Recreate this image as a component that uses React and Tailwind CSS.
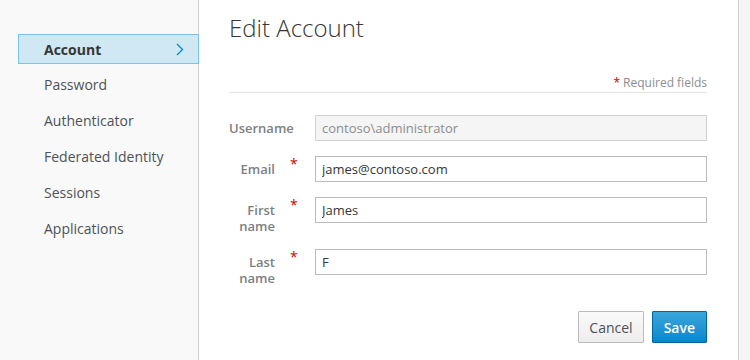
import React from "react";

const menu = ["Account", "Password", "Authenticator", "Federated Identity", "Sessions", "Applications"];

function Row({ label, required, value, disabled }) {
  return (
    <div className="flex items-start mb-[15px]">
      {required ? (
        <>
          <label className="w-[46px] text-right text-[13px] leading-[16px] pt-[5px] font-semibold text-[#7d7f82]">
            {label}
          </label>
          <span className="w-[40px] pl-[15px] text-[14px] leading-[16px] text-[#c00]">*</span>
        </>
      ) : (
        <>
          <label className="w-[60px] text-right text-[13px] leading-[16px] pt-[5px] font-semibold text-[#7d7f82]">
            {label}
          </label>
          <span className="w-[26px]" />
        </>
      )}
      <input
        type="text"
        value={value}
        readOnly
        disabled={disabled}
        className={
          "flex-1 h-[26px] px-[6px] text-[13px] border outline-none " +
          (disabled
            ? "bg-[#f5f5f5] border-[#d1d1d1] text-[#8b8d8f]"
            : "bg-white border-[#bbbbbb] text-[#363636]")
        }
      />
    </div>
  );
}

export default function App() {
  return (
    <div className="flex w-[750px] h-[360px] overflow-hidden font-['Open_Sans',sans-serif] text-[#363636]">
      {/* sidebar */}
      <div className="w-[199px] shrink-0 bg-[#f9f9f9] border-r border-[#d1d1d1] pt-[34px]">
        {menu.map((item, i) =>
          i === 0 ? (
            <div
              key={item}
              className="ml-[18px] mr-[-1px] h-[30px] flex items-center justify-between pl-[25px] pr-[14px] bg-[#cfe8f3] border border-[#7cc4e6] text-[14px] font-bold mb-[2px]"
            >
              <span>{item}</span>
              <svg width="8" height="13" viewBox="0 0 8 13">
                <path d="M1 1l5.5 5.5L1 12" fill="none" stroke="#0088ce" strokeWidth="1.3" />
              </svg>
            </div>
          ) : (
            <div key={item} className="ml-[44px] h-[36px] flex items-center text-[14px] text-[#4d5258]">
              {item}
            </div>
          )
        )}
      </div>

      {/* main */}
      <div className="w-[539px] shrink-0 bg-white pl-[30px] pr-[31px]">
        <h1 className="text-[24px] font-light leading-[32px] mt-[12px] text-[#363636]">Edit Account</h1>
        <div className="mt-[31px] text-right text-[12px] leading-[16px] text-[#8b8d8f] pb-[1px] border-b border-[#e3e3e3]">
          <span className="text-[#c00]">*</span> Required fields
        </div>

        <div className="mt-[22px]">
          <Row label="Username" value="contoso\administrator" disabled />
          <Row label="Email" required value="james@contoso.com" />
          <Row label="First name" required value="James" />
          <Row label="Last name" required value="F" />
        </div>

        <div className="flex justify-end gap-[8px] mt-[25px]">
          <button className="h-[32px] px-[10px] text-[14px] text-[#4d5258] border border-[#bbbbbb] rounded-[1px] bg-gradient-to-b from-[#fafafa] to-[#ededed]">
            Cancel
          </button>
          <button className="h-[32px] px-[11px] text-[14px] font-semibold text-white border border-[#00659c] rounded-[1px] bg-gradient-to-b from-[#39a5dc] to-[#0088ce]">
            Save
          </button>
        </div>
      </div>

      <div className="flex-1 bg-[#f5f5f5] border-l border-[#d1d1d1]" />
    </div>
  );
}
